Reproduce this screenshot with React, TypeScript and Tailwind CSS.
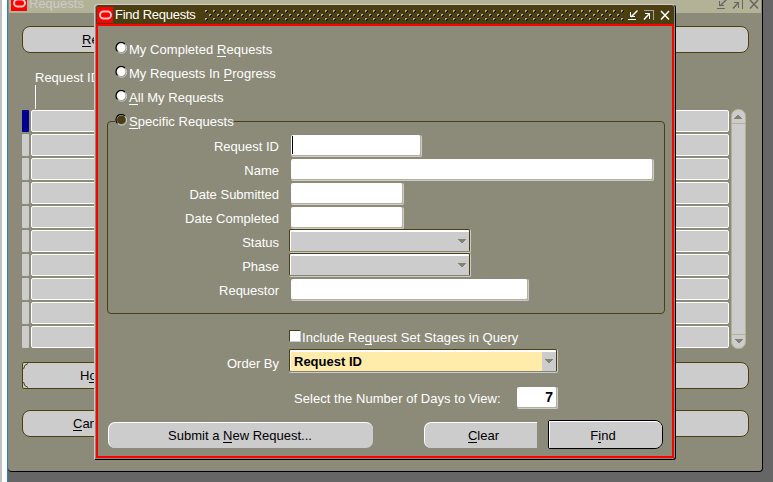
import React from "react";

function OracleIcon() {
  return (
    <svg width="16" height="16" className="shrink-0" viewBox="0 0 16 16">
      <rect width="16" height="16" fill="#ff0000" />
      <rect x="3" y="4.5" width="11" height="7" rx="3.5" fill="none" stroke="#ffc4c4" strokeWidth="2" />
    </svg>
  );
}

function WindowButtons({ color, edge }: { color: string; edge: string }) {
  return (
    <svg width="44" height="12" viewBox="0 0 44 12" className="shrink-0" shapeRendering="crispEdges">
      <g fill="none" stroke={color}>
        <path d="M1 10.5h8" strokeWidth="1" />
        <path d="M3.5 3v4.5H8" strokeWidth="1" />
        <path d="M10.5 1.5L4 8" strokeWidth="1.4" shapeRendering="auto" />
        <path d="M18 4.5h4.5v5" strokeWidth="1" />
        <path d="M17 10.5L22.5 4.5" strokeWidth="1.5" shapeRendering="auto" />
        <path d="M34 2l8 8.5M42 2l-8 8.5" strokeWidth="1.5" shapeRendering="auto" />
      </g>
      <path d="M17 1.5h9.5V11" fill="none" stroke={edge} />
    </svg>
  );
}

function Radio({ on = false }: { on?: boolean }) {
  return (
    <svg width="12" height="12" viewBox="0 0 12 12" className="mr-[2px] shrink-0">
      <circle cx="6.7" cy="6.2" r="5" fill="none" stroke="#cccccc" />
      <path d="M2.5 9.4A5 5 0 0 1 9.9 2" fill="none" stroke="#000000" strokeWidth="1.2" />
      <circle cx="6.3" cy="5.8" r="4.3" fill={on ? "#4b3f11" : "#ffffff"} />
    </svg>
  );
}

function U({ children }: { children: React.ReactNode }) {
  return <span className="inline-block h-[14px] border-b border-current leading-[14px]">{children}</span>;
}

function RadioRow({ children, on }: { children: React.ReactNode; on?: boolean }) {
  return (
    <div className="flex h-6 items-center">
      <Radio on={on} />
      <span className="relative top-px tracking-[0.04px]">{children}</span>
    </div>
  );
}

function FieldRow({ label, low, children }: { label: string; low?: boolean; children: React.ReactNode }) {
  return (
    <div className="flex h-6 items-start">
      <span className={`mr-[11px] w-[171px] shrink-0 text-right ${low ? "leading-[27px]" : "leading-[25px]"}`}>{label}</span>
      {children}
    </div>
  );
}

function Field({ w, children }: { w: string; children?: React.ReactNode }) {
  return (
    <div className={`mt-px ml-px h-[22px] shrink-0 rounded-[2px] border-r border-b border-[#cccccc] ${w}`}>
      <div className="h-[21px] rounded-[2px] border-r border-b border-[#b4b296] bg-white">{children}</div>
    </div>
  );
}

function Arrow() {
  return (
    <svg width="8" height="5" viewBox="0 0 8 5" shapeRendering="crispEdges">
      <path d="M0 0h8v1h-1v1h-1v1h-1v1h-2v-1h-1v-1h-1v-1h-1z" fill="#84836f" />
    </svg>
  );
}

function Combo({ w, value }: { w: string; value?: string }) {
  return (
    <div className={`h-6 shrink-0 rounded-[2px] border-r border-b border-[#cccccc] ${w}`}>
      <div className="h-[23px] rounded-[2px] border border-[#4b3f11] border-b-[#84836f]">
        <div
          className={`flex h-[21px] rounded-[1px] border-t-2 border-l border-t-white border-l-white text-[13px] font-bold text-black ${value ? "bg-[#ffecaa]" : "bg-[#cccccc]"}`}
        >
          <span className="flex-1 pl-[3px] leading-[20px]">{value}</span>
          <span className="flex w-[14px] items-center justify-center bg-[#cccccc]">
            <Arrow />
          </span>
        </div>
      </div>
    </div>
  );
}

function TitleDots() {
  return (
    <svg width="419" height="11" className="mt-px shrink-0" shapeRendering="crispEdges">
      <defs>
        <pattern id="studs" width="8" height="8" patternUnits="userSpaceOnUse">
          <path d="M0 0h2v1h-1v1h-1zM4 4h2v1h-1v1h-1z" fill="#b4b296" />
          <path d="M2 1h1v1h-1v1h-1v-1h1zM6 5h1v1h-1v1h-1v-1h1z" fill="#000000" />
        </pattern>
      </defs>
      <rect width="419" height="11" fill="url(#studs)" />
    </svg>
  );
}

function FindDialog() {
  return (
    <div className="absolute top-1 left-[86px] flex h-[456px] w-[582px] flex-col rounded-tl-[4px] rounded-tr-[4px] rounded-br-[3px] border-t border-r border-b border-l border-t-[#cccccc] border-r-black border-b-black border-l-[#cccccc] bg-[#8c8b79] pr-px pb-px pl-px text-white">
      <div className="flex h-[19px] shrink-0 items-center rounded-t-[3px] bg-[#4b3f11] pr-[3px] pl-px">
        <OracleIcon />
        <span className="ml-[2px] w-[90px] shrink-0 tracking-[-0.25px] whitespace-nowrap">Find Requests</span>
        <TitleDots />
        <span className="ml-auto">
          <WindowButtons color="#ffffff" edge="#a5a5a5" />
        </span>
      </div>
      <div className="flex-1 border-2 border-[#ff0000] pt-[10px]">
        <div className="pl-[17px]">
          <RadioRow>My Completed <U>R</U>equests</RadioRow>
          <RadioRow>My Requests In <U>P</U>rogress</RadioRow>
          <RadioRow><U>A</U>ll My Requests</RadioRow>
        </div>
        <div className="mt-[13px] ml-[9px] h-[193px] w-[558px] rounded-[4px] border border-[#4b3f11]">
          <div className="-mt-[14px] mb-[2px] ml-[7px] w-max bg-[#8c8b79]">
            <RadioRow on><U>S</U>pecific Requests</RadioRow>
          </div>
          <FieldRow label="Request ID">
            <Field w="w-[131px]">
              <div className="ml-px h-[18px] w-px translate-y-px bg-black" />
            </Field>
          </FieldRow>
          <FieldRow label="Name"><Field w="w-[363px]" /></FieldRow>
          <FieldRow label="Date Submitted"><Field w="w-[113px]" /></FieldRow>
          <FieldRow label="Date Completed"><Field w="w-[113px]" /></FieldRow>
          <div className="-mt-px flex flex-col">
            <FieldRow label="Status" low><div className="-ml-px"><Combo w="w-[182px]" /></div></FieldRow>
            <FieldRow label="Phase" low><div className="-ml-px"><Combo w="w-[182px]" /></div></FieldRow>
          </div>
          <div className="mt-px"><FieldRow label="Requestor"><Field w="w-[238px]" /></FieldRow></div>
        </div>
        <div className="mt-[11px] ml-[191px] flex h-6 items-center">
          <span className="-mt-[2px] h-3 w-3 shrink-0 border border-t-[#4b3f11] border-r-[#cccccc] border-b-[#cccccc] border-l-[#4b3f11] bg-white" />
          <span className="ml-px tracking-[0.07px]">Include Re<U>q</U>uest Set Stages in Query</span>
        </div>
        <div className="flex h-6 pl-[10px]">
          <span className="mr-[10px] w-[171px] text-right leading-[29px]">Order By</span>
          <Combo w="w-[269px]" value="Request ID" />
        </div>
        <div className="mt-[13px] ml-[196px] flex h-6">
          <span className="w-[222px] leading-[25px] tracking-[0.05px]">Select the Number of Days to View:</span>
          <Field w="w-[41px]">
            <div className="pr-[3px] text-right text-[14px] leading-[21px] font-bold text-black">7</div>
          </Field>
        </div>
        <div className="mt-[10px] flex h-[29px] items-center pl-[10px] text-black">
          <div className="flex h-[26px] w-[265px] items-center justify-center rounded-[7px] border-t border-l border-white bg-[#cccccc] pr-[2px]">
            <span>Submit a <U>N</U>ew Request...</span>
          </div>
          <div className="ml-[51px] flex h-[26px] w-[113px] items-center justify-center rounded-l-[7px] border-t border-l border-white bg-[#cccccc] pl-[5px]">
            <span><U>C</U>lear</span>
          </div>
          <div className="ml-[11px] h-[29px] w-[115px] rounded-l-[2px] rounded-r-[8px] border border-black">
            <div className="flex h-[27px] items-center justify-center rounded-l-[1px] rounded-r-[7px] border-t border-l border-white bg-[#cccccc] pr-[6px]">
              <span>F<U>i</U>nd</span>
            </div>
          </div>
        </div>
      </div>
    </div>
  );
}

function WideButton({ children, pad, square }: { children: React.ReactNode; pad: string; square?: boolean }) {
  return (
    <div
      className={`flex h-[27px] w-[727px] shrink-0 items-center border border-[#4b3f11] bg-[#cccccc] text-black ${pad} ${square ? "rounded-l-[2px] rounded-r-[8px]" : "rounded-[8px]"}`}
    >
      {square && (
        <svg width="6" height="25" viewBox="0 0 6 25" className="shrink-0">
          <path d="M5 0.5Q1 1.5 0.5 6M0.5 19Q1 23.5 5 24.5" fill="none" stroke="#4b3f11" />
        </svg>
      )}
      <span>{children}</span>
    </div>
  );
}

const rows = Array.from({ length: 10 }, (_, i) => i);

export default function App() {
  return (
    <div
      className="flex h-[482px] w-[773px] overflow-hidden bg-[#666666] text-[13px] leading-[15px] whitespace-nowrap"
      style={{ fontFamily: '"Liberation Sans", Arial, sans-serif' }}
    >
      <div className="w-2 shrink-0 border-r border-l-2 border-r-[#1e82dc] border-l-[#c0c0c0] bg-white" />
      <div className="relative h-[472px] w-[755px] shrink-0 rounded-b-[4px] border-r border-b border-black bg-[#8c8b79]">
        <div className="ml-px flex h-[13px] w-[752px] items-end bg-[#b4b296] pr-px pb-[2px] pl-[2px]">
          <OracleIcon />
          <span className="ml-[2px] text-[#cccccc]">Requests</span>
          <span className="ml-auto translate-y-[-1px]">
            <WindowButtons color="#666666" edge="#666666" />
          </span>
        </div>
        <div className="flex flex-col pt-[13px] pl-[14px]">
          <WideButton pad="pl-[59px]"><U>R</U>e</WideButton>
          <div className="mt-[17px] ml-[13px] h-[39px] text-white">
            <div className="h-[15px]">Request ID</div>
            <div className="h-6 w-px bg-white" />
          </div>
          <div className="flex h-[240px]">
            <div className="flex flex-col gap-[2px] pt-px">
              {rows.map((i) => (
                <div key={i} className="flex h-[22px] gap-[2px]">
                  <div className={`h-[22px] w-[7px] rounded-[1px] ${i === 0 ? "bg-[#00008c]" : "bg-[#cccccc]"}`} />
                  <div className="h-[22px] w-[698px] rounded-[2px] border border-white bg-[#cccccc]" />
                </div>
              ))}
            </div>
            <div className="ml-[2px] flex h-[240px] w-[15px] flex-col justify-between overflow-hidden rounded-[7px] border border-[#b4b296] bg-[#cccccc]">
              <div className="flex h-[14px] rotate-180 items-center justify-center border-t border-[#b4b296]"><Arrow /></div>
              <div className="flex h-[14px] items-center justify-center border-t border-[#b4b296]"><Arrow /></div>
            </div>
          </div>
          <div className="mt-[13px]"><WideButton pad="pl-0" square><span className="ml-[51px]">H<U>o</U></span></WideButton></div>
          <div className="mt-[21px]"><WideButton pad="pl-[50px]"><U>C</U>an</WideButton></div>
        </div>
        <FindDialog />
      </div>
    </div>
  );
}
